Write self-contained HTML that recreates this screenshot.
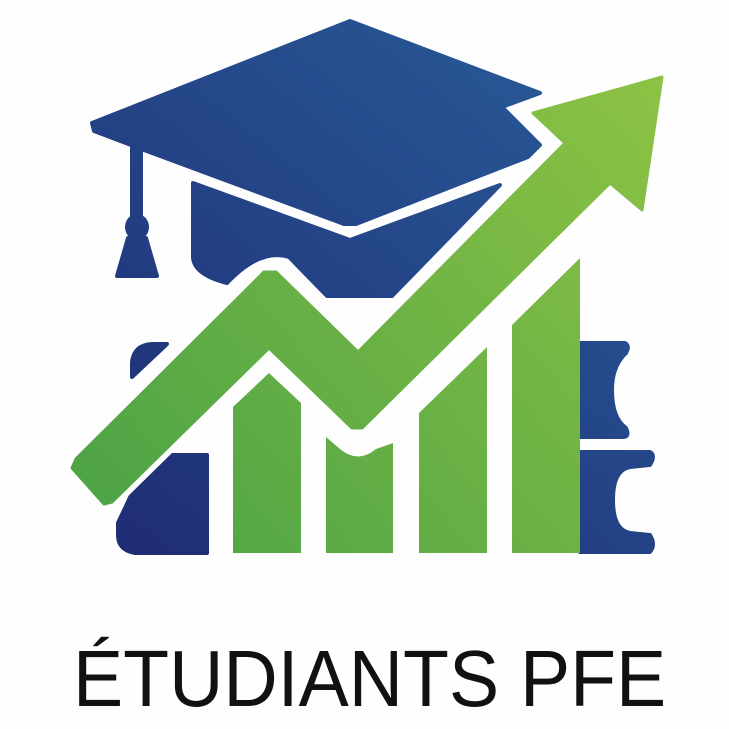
<!DOCTYPE html>
<html><head><meta charset="utf-8"><style>
html,body{margin:0;padding:0;background:#fefefe;}
svg{display:block}
</style></head><body>
<svg width="729" height="729" viewBox="0 0 729 729" xmlns="http://www.w3.org/2000/svg">
<defs>
<linearGradient id="b" gradientUnits="userSpaceOnUse" x1="120" y1="560" x2="560" y2="20"><stop offset="0" stop-color="#1f2c74"/><stop offset="1" stop-color="#285a98"/></linearGradient>
<linearGradient id="g" gradientUnits="userSpaceOnUse" x1="100" y1="560" x2="660" y2="80"><stop offset="0" stop-color="#4ba246"/><stop offset="1" stop-color="#8dc244"/></linearGradient>
</defs>
<rect width="729" height="729" fill="#fefefe"/>
<g fill="url(#b)" stroke="url(#b)" stroke-linejoin="round" stroke-width="4">
<polygon points="350,21 540,93 502,107 540,145 528,157 356,224 344,224 144,150 94,131 92,123"/>
<rect x="130" y="145" width="13" height="72" stroke="none"/>
<ellipse cx="137" cy="227" rx="12" ry="13" stroke="none"/>
<polygon points="128,238 146,238 157,276 117,276"/>
<path d="M193,183 L350,240 L500,185 L392,296 L327,296 L289,257 Q260,248 227,283 Q195,275 193,258 Z"/>
<path d="M132,377 L132,362 Q134,345 152,344 L167,344 Z"/>
<path d="M580,343 L625,343 Q630,346 626,353 Q612,366 612,390 Q612,418 626,428 Q630,437 623,437 L580,437 Z"/>
<path d="M118,523 L150,455 L207,455 L207,553 L135,553 Q118,550 118,535 Z"/>
<path d="M580,452 L650,452 Q656,455 650,465 L630,467 Q613,470 613,500 Q613,530 630,533 L650,535 Q656,545 650,552 L580,552 Z"/>
</g>
<g fill="url(#g)">
<polygon points="233,407 269,373 301,403 301,553 233,553"/>
<path d="M326,437 L340,449 Q358,464 376,449 L393,443 L393,553 L326,553 Z"/>
<polygon points="419,413 487,347 487,553 419,553"/>
<polygon points="512,325 580,258 580,553 512,553"/>
<polygon points="76,459 264,272 276,272 358,352 565,143 533,113 662,77 642,210 610,183 362,428 352,428 269,348 112,502 104,504 72,468" stroke="#fefefe" stroke-width="14" stroke-linejoin="round"/>
<polygon points="76,459 264,272 276,272 358,352 565,143 533,113 662,77 642,210 610,183 362,428 352,428 269,348 112,502 104,504 72,468" stroke="url(#g)" stroke-width="3" stroke-linejoin="round"/>
</g>
<text transform="translate(73,706) scale(0.94,1)" x="0" y="0" font-family="'Liberation Sans', sans-serif" font-size="80" fill="#111">ÉTUDIANTS PFE</text>
</svg>
</body></html>
